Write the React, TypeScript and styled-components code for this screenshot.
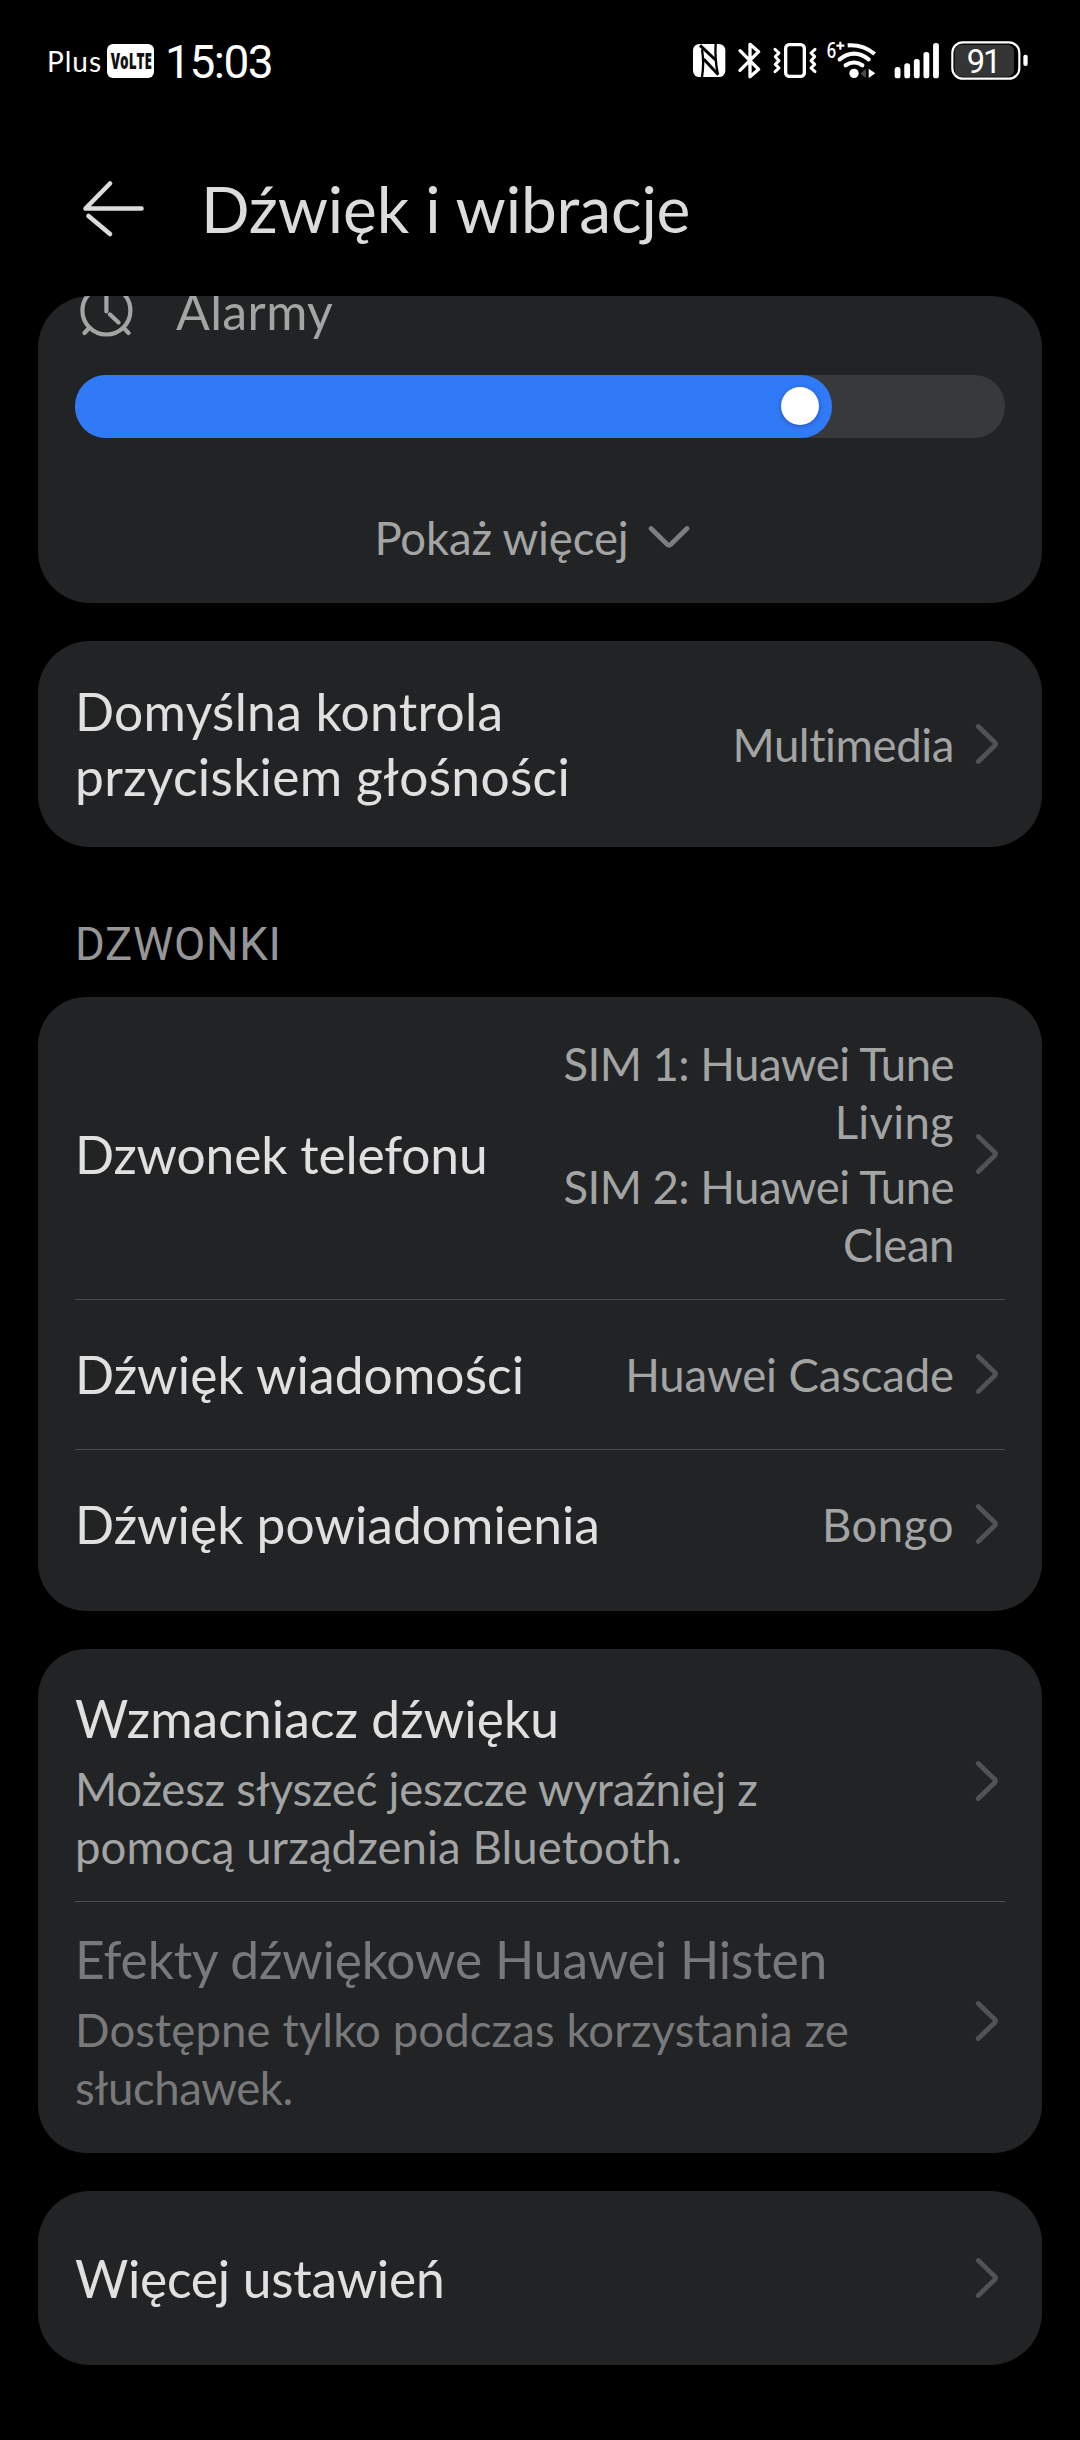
import React from 'react';
import styled, { createGlobalStyle } from 'styled-components';

const color = {
  card: '#222325',
  primary: '#e0e0e0',
  secondary: '#a3a4a4',
  disabled: '#78797a',
  divider: '#4c4d4f',
  chevron: '#515254',
  accent: '#317af7',
  track: '#38393b',
};

const GlobalStyle = createGlobalStyle`
  * { box-sizing: border-box; }
  body {
    margin: 0;
    background: #000;
    font-family: Lato, "Open Sans", sans-serif;
  }
  svg { display: block; flex: none; overflow: visible; }
`;

const Screen = styled.main`
  width: 1080px;
  height: 2440px;
  display: flex;
  flex-direction: column;
  background: #000;
  overflow: hidden;
`;

/* ---------- status bar ---------- */

const StatusBar = styled.div`
  flex: none;
  height: 122px;
  padding: 0 50px 0 46px;
  display: flex;
  align-items: center;
  justify-content: space-between;
  color: #fff;
`;

const StatusGroup = styled.div`
  display: flex;
  align-items: center;
`;

const Carrier = styled.span`
  width: 61px;
  font-size: 28px;
  line-height: 34px;
  letter-spacing: 0.035em;
  padding-left: 1px;
`;

const Clock = styled.span`
  margin-left: 11px;
  font-family: Roboto, sans-serif;
  font-size: 46px;
  line-height: 54px;
  letter-spacing: -0.032em;
  padding-top: 2px;
`;

const VolteBadge = () => (
  <svg width="47" height="34" viewBox="0 0 47 34">
    <rect width="47" height="34" rx="6" fill="#fff" />
    <text transform="translate(3.700 25.200) scale(0.6 1)" fontFamily="Open Sans" fontWeight="800" fontSize="22.5" fill="#111">
      VoLTE
    </text>
  </svg>
);

const NfcIcon = () => (
  <svg width="40" height="40" viewBox="36 63 120 120">
    <rect x="39" y="72" width="97" height="99" rx="19" fill="#fff" />
    <g fill="none" stroke="#000" strokeWidth="7">
      <path d="M66 171 Q73 130 66 88" />
      <path d="M60 76 L107 120" strokeWidth="9" />
      <path d="M71 117 L115 164" strokeWidth="9" />
      <path d="M107 72 Q104 115 113 160" />
    </g>
  </svg>
);

const BluetoothIcon = () => (
  <svg width="36" height="40" viewBox="156 63 108 120">
    <path d="M180 92 L236 148 L210 170 V73 L236 95 L180 151" fill="none" stroke="#fff" strokeWidth="10" strokeLinejoin="round" strokeLinecap="round" />
  </svg>
);

const VibrateIcon = () => (
  <svg width="58" height="40" viewBox="264 63 174 120">
    <g fill="none" stroke="#fff" strokeLinejoin="round" strokeLinecap="round">
      <rect x="317" y="74" width="56" height="95" rx="11" strokeWidth="10" />
      <path d="M285 88 L297 99 L286 110 L297 122 L286 133 L297 144 L285 155" strokeWidth="9" />
      <path d="M405 88 L393 99 L404 110 L393 122 L404 133 L393 144 L405 155" strokeWidth="9" />
    </g>
  </svg>
);

const WifiIcon = () => (
  <svg width="62" height="40" viewBox="438 63 186 120">
    <text transform="translate(440 113) scale(0.8 1)" fontFamily="Open Sans" fontWeight="600" fontSize="62" fill="#fff">
      6
    </text>
    <path d="M469 77 H493 M481 65 V89" stroke="#fff" strokeWidth="6.500" />
    <g fill="none" stroke="#fff" strokeWidth="12.500" strokeLinecap="round">
      <path d="M497 136 Q522 119 547 136" />
      <path d="M479 118 Q522 84 566 118" />
      <path d="M503 76 Q550 73 584 102" strokeLinecap="butt" />
    </g>
    <circle cx="522" cy="160" r="14" fill="#fff" />
    <path d="M558 146 V174 L541 161 Z" fill="#4a4a4a" />
    <path d="M566 146 V174 L586 160 Z" fill="#fff" />
  </svg>
);

const SIGNAL_TOPS = [141, 130, 117, 96, 69];

const SignalIcon = () => (
  <svg width="58" height="40" viewBox="624 63 174 120">
    {SIGNAL_TOPS.map((top, i) => (
      <rect key={top} x={644 + i * 28.8} y={top} width="17.5" height={175 - top} rx="8" fill="#fff" />
    ))}
  </svg>
);

const BatteryIcon = () => (
  <svg width="84" height="40" viewBox="798 63 252 120">
    <rect x="824" y="74" width="178" height="96" rx="20" fill="#353535" />
    <rect x="817" y="67" width="201" height="109" rx="31" fill="none" stroke="#fff" strokeWidth="6.5" />
    <rect x="1030" y="104" width="13" height="34" rx="6" fill="#fff" />
    <text x="860" y="158" fontFamily="Roboto" fontSize="98" letterSpacing="-6" fill="#fff">
      91
    </text>
  </svg>
);

/* ---------- header ---------- */

const Header = styled.header`
  flex: none;
  height: 174px;
  padding-left: 80px;
  display: flex;
  align-items: center;
  gap: 53px;
`;

const Title = styled.h1`
  margin: 0;
  font-size: 64px;
  line-height: 80px;
  font-weight: 400;
  letter-spacing: -0.002em;
  color: #dcdcdc;
`;

const BackArrow = () => (
  <svg width="68" height="62" viewBox="80 178 68 62">
    <g fill="none" stroke="#dcdcdc" strokeWidth="4.6" strokeLinecap="round" strokeLinejoin="round">
      <path d="M110 183.5 L85.5 208.5 H141.5" />
      <path d="M88.500 216 L110 234" />
    </g>
  </svg>
);

/* ---------- cards ---------- */

const Content = styled.div`
  display: flex;
  flex-direction: column;
  padding: 0 38px;
`;

const Card = styled.section<{ $gap?: number; $radius?: number }>`
  flex: none;
  margin-top: ${(p) => p.$gap ?? 38}px;
  padding: 12px 37px;
  border-radius: ${(p) => p.$radius ?? 48}px;
  background: ${color.card};
  overflow: hidden;
`;

const VolumeCard = styled(Card)`
  height: 307px;
  padding: 0 37px;
  display: flex;
  flex-direction: column;
`;

const VolumeLabel = styled.div`
  height: 60px;
  margin-top: -15px;
  padding-left: 1px;
  display: flex;
  align-items: center;
  gap: 40px;
  font-size: 50px;
  line-height: 60px;
  letter-spacing: 0.008em;
  color: ${color.secondary};
`;

const AlarmIcon = () => (
  <svg width="60" height="60" viewBox="76 281 60 60">
    <g fill="none" stroke={color.secondary} strokeWidth="4.200" strokeLinecap="round">
      <circle cx="106.400" cy="310.500" r="24" />
      <path d="M106.400 292 V311.500 M110 314.500 L118.500 322.500 M89 328 L84.500 333 M123.800 328 L128.500 333" />
      <path d="M89 293 L84.500 288 M123.800 293 L128.500 288" />
    </g>
  </svg>
);

const Slider = styled.div`
  flex: none;
  height: 63px;
  margin-top: 34px;
  border-radius: 31px;
  background: ${color.track};
`;

const SliderFill = styled.div`
  height: 100%;
  padding: 0 13px 1px 0;
  display: flex;
  align-items: center;
  justify-content: flex-end;
  border-radius: 31px;
  background: ${color.accent};
`;

const SliderKnob = styled.div`
  width: 38px;
  height: 38px;
  border-radius: 50%;
  background: #fff;
  box-shadow: 0 1px 5px rgba(0, 0, 0, 0.3);
`;

const ShowMore = styled.div`
  margin-top: 71px;
  height: 58px;
  padding-right: 1px;
  display: flex;
  align-items: center;
  justify-content: center;
  gap: 4px;
  font-size: 45.5px;
  line-height: 58px;
  letter-spacing: -0.003em;
  color: ${color.secondary};
`;

const ChevronDown = () => (
  <svg width="72" height="40" viewBox="0 0 72 40">
    <path d="M18 10.500 L34.300 26.500 Q36 28 37.700 26.500 L54 10.500" fill="none" stroke="#7d7e80" strokeWidth="4.800" strokeLinecap="round" />
  </svg>
);

const Row = styled.div<{ $height: number; $divided?: boolean }>`
  height: ${(p) => p.$height}px;
  padding-bottom: 1px;
  display: flex;
  align-items: center;
  border-bottom: ${(p) => (p.$divided ? `1px solid ${color.divider}` : 'none')};
`;

const RowText = styled.div`
  flex: 1;
  min-width: 0;
  padding-top: 1px;
`;

const Line = styled.div<{ $track?: number }>`
  white-space: nowrap;
  letter-spacing: ${(p) => p.$track ?? 0}em;
`;

const Label = styled.div<{ $disabled?: boolean }>`
  font-size: 51.5px;
  line-height: 65px;
  color: ${(p) => (p.$disabled ? color.disabled : color.primary)};
`;

const Description = styled.div<{ $disabled?: boolean }>`
  margin-top: 9px;
  font-size: 45.5px;
  line-height: 58px;
  color: ${(p) => (p.$disabled ? color.disabled : color.secondary)};
`;

const Value = styled.div`
  display: flex;
  flex-direction: column;
  gap: 7px;
  margin-right: 21px;
  padding-top: 2px;
  text-align: right;
  font-size: 45.5px;
  line-height: 58px;
  color: ${color.secondary};
`;

const ChevronRight = () => (
  <svg width="30" height="42" viewBox="0 0 30 42">
    <path d="M3.300 3.500 L19.800 19.500 Q21.200 21 19.800 22.500 L3.300 38.500" fill="none" stroke={color.chevron} strokeWidth="4.800" strokeLinecap="round" />
  </svg>
);

const SectionLabel = styled.h2`
  flex: none;
  margin: 0;
  height: 150px;
  padding: 69px 37px 0;
  font-family: Roboto, sans-serif;
  font-size: 45.5px;
  line-height: 58px;
  font-weight: 400;
  letter-spacing: 0.015em;
  color: #969696;
`;

type TextLine = [text: string, track?: number];

interface SettingProps {
  height: number;
  divided?: boolean;
  disabled?: boolean;
  label: TextLine[];
  description?: TextLine[];
  value?: TextLine[][];
}

const lines = (items: TextLine[]) =>
  items.map(([text, track]) => (
    <Line key={text} $track={track}>
      {text}
    </Line>
  ));

const Setting = ({ height, divided, disabled, label, description, value }: SettingProps) => (
  <Row $height={height} $divided={divided}>
    <RowText>
      <Label $disabled={disabled}>{lines(label)}</Label>
      {description && <Description $disabled={disabled}>{lines(description)}</Description>}
    </RowText>
    {value && (
      <Value>
        {value.map((group) => (
          <div key={group[0][0]}>{lines(group)}</div>
        ))}
      </Value>
    )}
    <ChevronRight />
  </Row>
);

export default function App() {
  const volume = 757 / 930;
  return (
    <>
      <GlobalStyle />
      <Screen>
        <StatusBar>
          <StatusGroup>
            <Carrier>Plus</Carrier>
            <VolteBadge />
            <Clock>15:03</Clock>
          </StatusGroup>
          <StatusGroup>
            <NfcIcon />
            <BluetoothIcon />
            <VibrateIcon />
            <WifiIcon />
            <SignalIcon />
            <BatteryIcon />
          </StatusGroup>
        </StatusBar>
        <Header>
          <BackArrow />
          <Title>Dźwięk i wibracje</Title>
        </Header>
        <Content>
          <VolumeCard $gap={0} $radius={52}>
            <VolumeLabel>
              <AlarmIcon />
              Alarmy
            </VolumeLabel>
            <Slider>
              <SliderFill style={{ width: `${volume * 100}%` }}>
                <SliderKnob />
              </SliderFill>
            </Slider>
            <ShowMore>
              Pokaż więcej
              <ChevronDown />
            </ShowMore>
          </VolumeCard>

          <Card $radius={52}>
            <Setting
              height={182}
              label={[['Domyślna kontrola', 0.006], ['przyciskiem głośności', 0.006]]}
              value={[[['Multimedia', -0.009]]]}
            />
          </Card>

          <SectionLabel>DZWONKI</SectionLabel>
          <Card $gap={0}>
            <Setting
              height={291}
              divided
              label={[['Dzwonek telefonu', -0.003]]}
              value={[
                [['SIM 1: Huawei Tune', -0.012], ['Living', 0.006]],
                [['SIM 2: Huawei Tune', -0.012], ['Clean', -0.01]],
              ]}
            />
            <Setting height={150} divided label={[['Dźwięk wiadomości', 0.002]]} value={[[['Huawei Cascade', -0.003]]]} />
            <Setting height={149} label={[['Dźwięk powiadomienia', 0.001]]} value={[[['Bongo', 0.012]]]} />
          </Card>

          <Card>
            <Setting
              height={241}
              divided
              label={[['Wzmacniacz dźwięku', 0.002]]}
              description={[['Możesz słyszeć jeszcze wyraźniej z', -0.005], ['pomocą urządzenia Bluetooth.', 0.002]]}
            />
            <Setting
              height={239}
              disabled
              label={[['Efekty dźwiękowe Huawei Histen', -0.0025]]}
              description={[['Dostępne tylko podczas korzystania ze', 0.002], ['słuchawek.', -0.009]]}
            />
          </Card>

          <Card $radius={52}>
            <Setting height={150} label={[['Więcej ustawień', -0.005]]} />
          </Card>
        </Content>
      </Screen>
    </>
  );
}
